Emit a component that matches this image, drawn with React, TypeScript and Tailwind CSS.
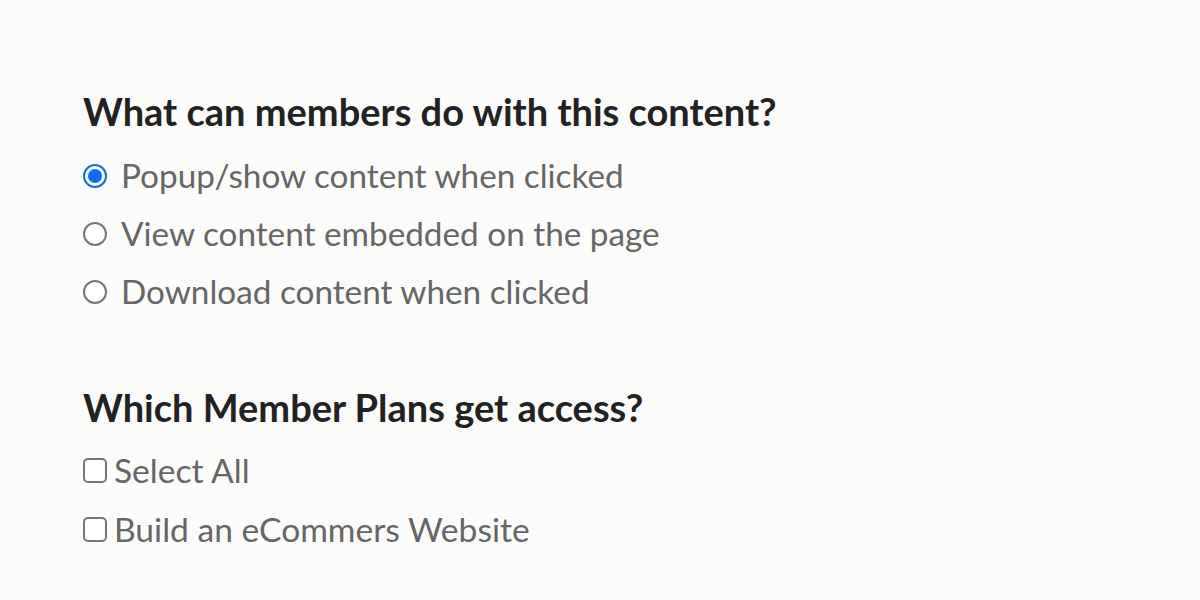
import React from "react";

const radios = [
  "Popup/show content when clicked",
  "View content embedded on the page",
  "Download content when clicked",
];

const plans = ["Select All", "Build an eCommers Website"];

export default function App() {
  const [choice, setChoice] = React.useState(0);
  const [checked, setChecked] = React.useState<boolean[]>([false, false]);

  return (
    <div
      className="w-[1200px] h-[600px] bg-[#fcfcfb] pl-[83px] pt-[88px]"
      style={{ fontFamily: "Lato, 'Open Sans', sans-serif" }}
    >
      <h2 className="text-[38px] leading-[46px] font-bold text-[#222222]">
        What can members do with this content?
      </h2>
      <div className="mt-[13px] flex flex-col">
        {radios.map((label, i) => (
          <label
            key={label}
            className="flex items-center gap-[14px] h-[58px] text-[33.3px] text-[#666666] cursor-pointer"
            onClick={() => setChoice(i)}
          >
            <span
              className={
                choice === i
                  ? "w-[24px] h-[24px] shrink-0 rounded-full border-[2px] border-[#0b6cff] bg-white flex items-center justify-center"
                  : "w-[24px] h-[24px] shrink-0 rounded-full border-[2px] border-[#767676] bg-white"
              }
            >
              {choice === i && (
                <span className="w-[14px] h-[14px] rounded-full bg-[#0b6cff]" />
              )}
            </span>
            {label}
          </label>
        ))}
      </div>

      <h2 className="mt-[63px] text-[38px] leading-[46px] font-bold text-[#222222]">
        Which Member Plans get access?
      </h2>
      <div className="mt-[11px] flex flex-col">
        {plans.map((label, i) => (
          <label
            key={label}
            className="flex items-center gap-[7px] h-[59px] text-[33.6px] text-[#666666] cursor-pointer"
            onClick={() =>
              setChecked(checked.map((c, j) => (j === i ? !c : c)))
            }
          >
            <span className="w-[24px] h-[25px] shrink-0 rounded-[5px] border-[2px] border-[#767676] bg-white" />
            {label}
          </label>
        ))}
      </div>
    </div>
  );
}
